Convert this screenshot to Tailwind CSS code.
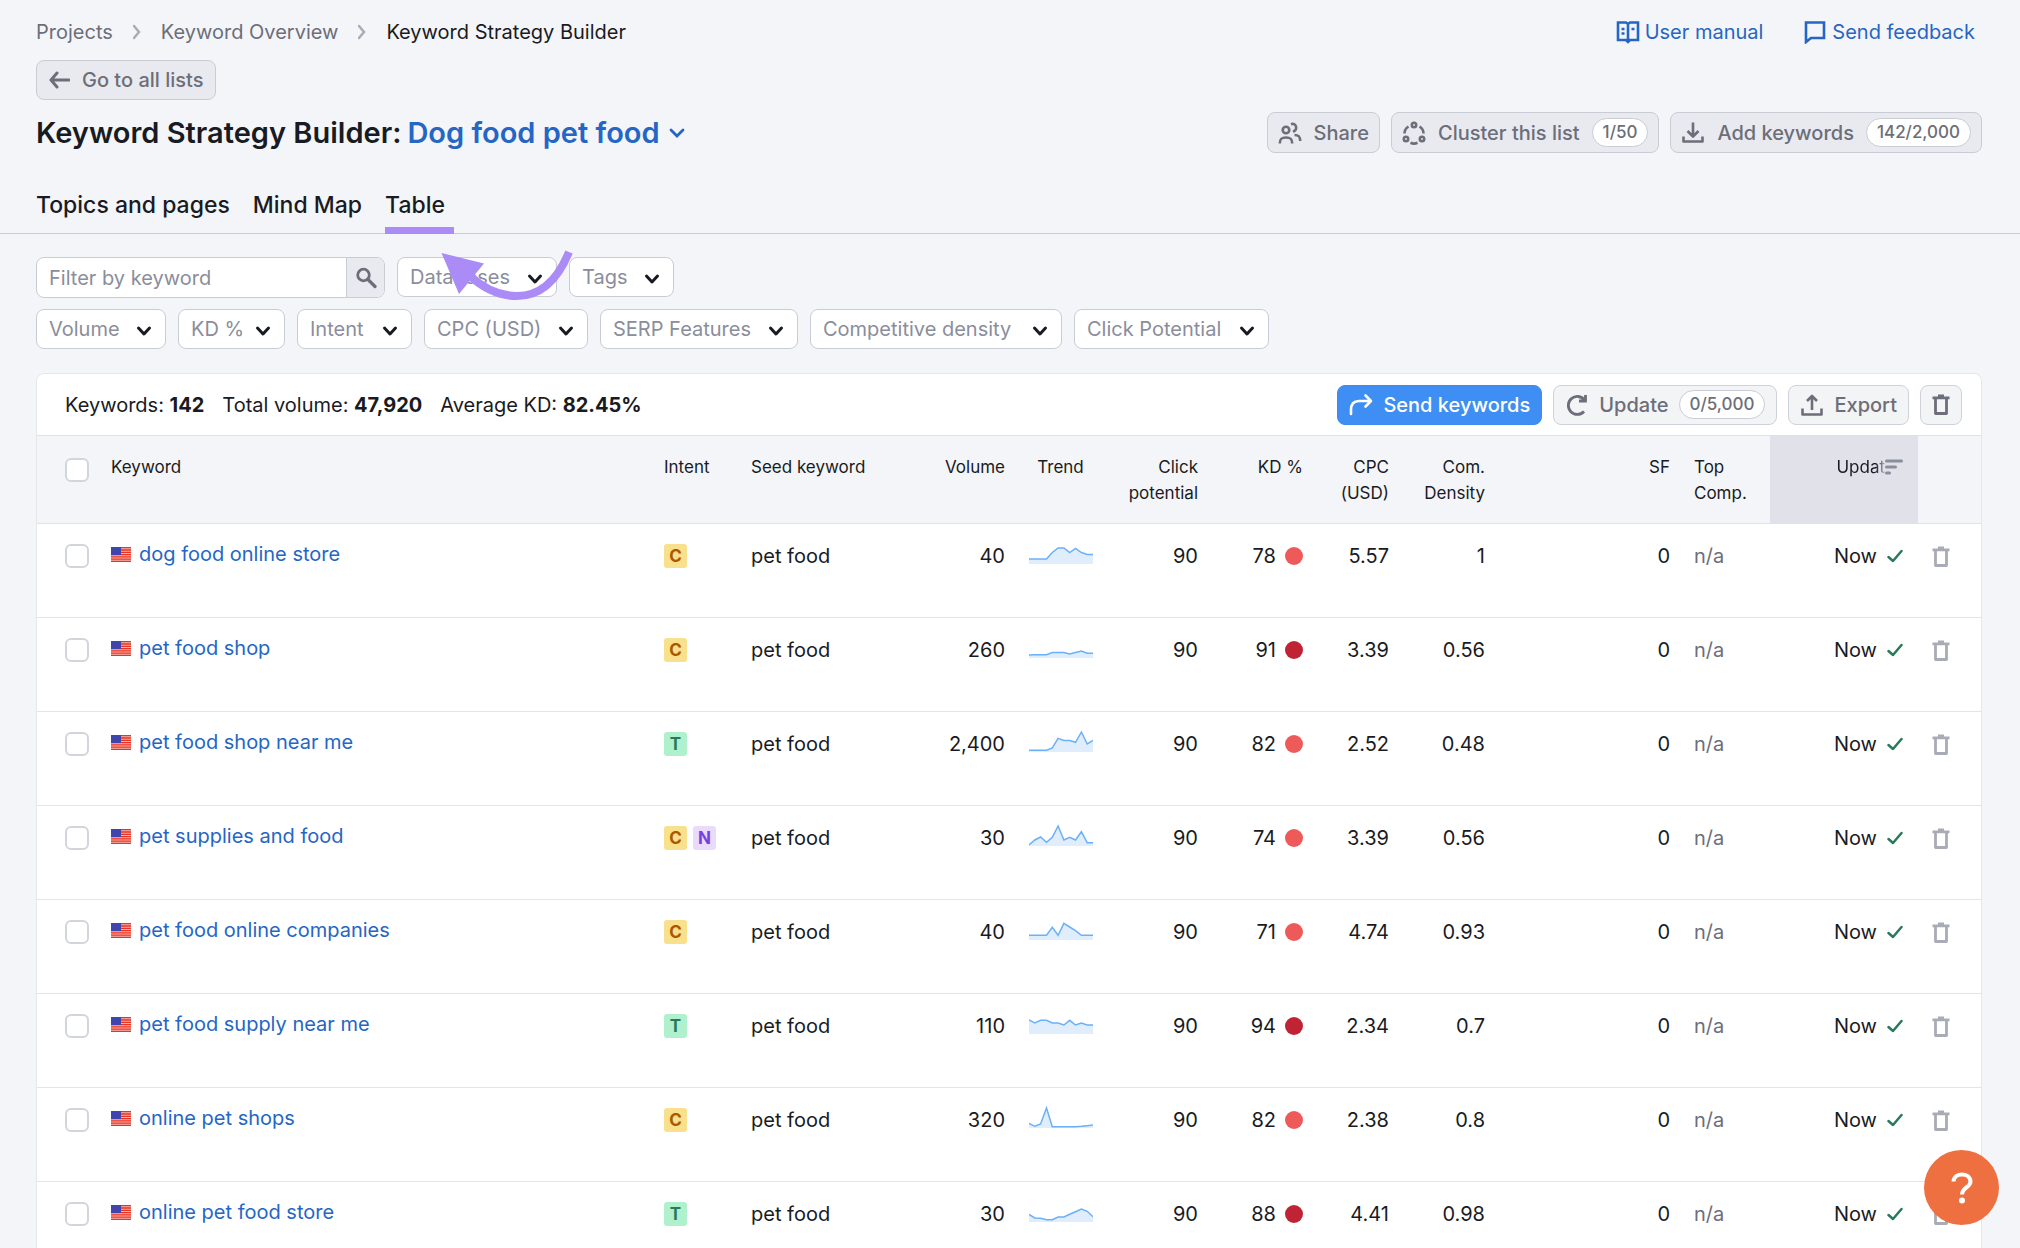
<!DOCTYPE html>
<html lang="en">
<head>
<meta charset="utf-8">
<meta name="viewport" content="width=device-width, initial-scale=1">
<title>Keyword Strategy Builder</title>
<script src="https://cdn.jsdelivr.net/npm/@tailwindcss/browser@4"></script>
</head>
<body class="bg-[#f4f5f9] font-['Inter',sans-serif] text-[20px] leading-7 text-[#191b23]">
<svg class="hidden" aria-hidden="true">
  <symbol id="chev" viewBox="0 0 16 16"><path d="M2.500 5l5.500 6 5.500-6" fill="none" stroke="currentColor" stroke-width="3" stroke-linecap="round" stroke-linejoin="round"/></symbol>
  <symbol id="trash" viewBox="0 0 18 22"><path d="M3.500 5v14.500h11V5" fill="none" stroke="currentColor" stroke-width="2.800" stroke-linejoin="round"/><path d="M.5 3.800h17M6 2h6" fill="none" stroke="currentColor" stroke-width="2.800"/></symbol>
  <symbol id="flag" viewBox="0 0 20 15"><path fill="#f9b9b0" d="M0 0h20v15H0z"/><path d="M0 .7h20M0 3h20M0 5.300h20M0 7.600h20M0 9.900h20M0 12.200h20M0 14.400h20" stroke="#ea3323" stroke-width="1.300"/><path fill="#3f45ac" d="M0 0h10v8H0z"/></symbol>
  <symbol id="check" viewBox="0 0 16 14"><path d="M1.500 8l4.500 4 8.500-10" fill="none" stroke="#287a5b" stroke-width="2.500" stroke-linecap="round" stroke-linejoin="round"/></symbol>
</svg>

<div class="relative">
  <header class="border-b border-[#c9ccd4]">
    <div class="pt-[18px] pr-[38px] pl-9">
      <div class="flex items-center justify-between">
        <nav class="flex items-center gap-5 text-[#6c6e79]" aria-label="Breadcrumb">
          <a href="#">Projects</a>
          <svg class="h-4 w-2" viewBox="0 0 8 16"><path d="M1 2l5 6-5 6" fill="none" stroke="#a9abb6" stroke-width="2.500" stroke-linecap="round"/></svg>
          <a href="#">Keyword Overview</a>
          <svg class="h-4 w-2" viewBox="0 0 8 16"><path d="M1 2l5 6-5 6" fill="none" stroke="#a9abb6" stroke-width="2.500" stroke-linecap="round"/></svg>
          <span class="text-[#191b23]">Keyword Strategy Builder</span>
        </nav>
        <div class="flex gap-10 pr-[7px] text-[#2566c5]">
          <a href="#" class="flex items-center gap-[5px]"><svg class="h-6 w-6" viewBox="0 0 24 24" fill="none" stroke="currentColor" stroke-width="2.600"><path d="M12 4l-2-1.500H2V20h8l2 2 2-2h8V2.500h-8zM12 4v18"/><path d="M5.500 9h3M5.500 13.500h3M15.500 9h3"/></svg>User manual</a>
          <a href="#" class="flex items-center gap-[5px]"><svg class="h-6 w-6" viewBox="0 0 24 24" fill="none" stroke="currentColor" stroke-width="2.600"><path d="M3 2.500h18V18H8l-5 4z"/></svg>Send feedback</a>
        </div>
      </div>
      <button class="mt-[14px] flex h-10 items-center gap-3 rounded-lg border border-[#c9ccd4] bg-[#e9eaef] px-3 font-medium text-[#6c6e79]">
        <svg class="h-5 w-[21px]" viewBox="0 0 21 20"><path d="M8 3L2 10l6 7M2.500 10H20" fill="none" stroke="currentColor" stroke-width="3" stroke-linecap="round" stroke-linejoin="round"/></svg>Go to all lists</button>
      <div class="mt-3 flex items-center justify-between">
        <h1 class="flex items-center gap-[6px] text-[29px] leading-10 font-semibold">Keyword Strategy Builder:
          <button class="flex items-center gap-[9px] text-[#2566c5]">Dog food pet food <svg class="h-4 w-4" viewBox="0 0 16 16"><path d="M2 5l6 6 6-6" fill="none" stroke="currentColor" stroke-width="2.800" stroke-linecap="round"/></svg></button></h1>
        <div class="flex gap-[11px] font-medium text-[#6c6e79] [&>button]:flex [&>button]:h-[41px] [&>button]:items-center [&>button]:gap-3 [&>button]:rounded-lg [&>button]:border [&>button]:border-[#c9ccd4] [&>button]:bg-[#e9eaef] [&>button]:px-[10px]">
          <button><svg class="h-6 w-6" viewBox="0 0 24 24" fill="none" stroke="currentColor" stroke-width="2.600"><circle cx="8" cy="9" r="3.300"/><path d="M1.800 22.500c0-5 2-6 6.200-6s6.200 1 6.200 6M13 3.200c5-2 7.500 5 2 7.500M16.500 14c4.500 0 5.700 2 5.700 6"/></svg>Share</button>
          <button><svg class="h-6 w-6" viewBox="0 0 24 24" fill="none" stroke="currentColor" stroke-width="2.600"><circle cx="12" cy="4" r="2.200"/><circle cx="4" cy="18" r="2.200"/><circle cx="20" cy="18" r="2.200"/><path d="M6.500 5.500c-2.500 1.500-4 4-4 7M17.500 5.500c2.500 1.500 4 4 4 7M8.500 21.800c2 .9 5 .9 7 0"/></svg>Cluster this list <span class="rounded-full border border-[#c9ccd4] bg-white px-[10px] text-[17px] leading-[27px]">1/50</span></button>
          <button><svg class="h-6 w-6" viewBox="0 0 24 24" fill="none" stroke="currentColor" stroke-width="2.600" stroke-linejoin="round"><path d="M12 1.500V15M6.500 10L12 15.500 17.500 10M2.500 15.500v5h19v-5"/></svg>Add keywords <span class="rounded-full border border-[#c9ccd4] bg-white px-[10px] text-[17px] leading-[27px]">142/2,000</span></button>
        </div>
      </div>
      <nav class="mt-[34px] flex h-[46px] gap-[23px] text-[23px] leading-[36px] font-medium" aria-label="Views">
        <a href="#">Topics and pages</a><a href="#">Mind Map</a><a href="#" class="relative" aria-current="page">Table<span class="absolute top-10 left-0 h-[7px] w-[69px] bg-[#ab8cf7]"></span></a>
      </nav>
    </div>
  </header>

  <main class="pr-[38px] pl-9">
    <form class="pt-[23px]">
      <div id="filters1" class="flex gap-3">
        <div class="flex h-[41px] w-[349px] overflow-hidden rounded-lg border border-[#c9ccd4] bg-white">
          <input aria-label="Filter by keyword" placeholder="Filter by keyword" class="min-w-0 flex-1 px-3 outline-none placeholder:text-[#8a8e9b]">
          <button type="button" aria-label="Search" class="flex w-[38px] items-center justify-center border-l border-[#c9ccd4] bg-[#e9eaef] text-[#6c6e79]"><svg class="h-[22px] w-[22px]" viewBox="0 0 22 22" fill="none" stroke="currentColor"><circle cx="8.500" cy="8" r="5.800" stroke-width="2.800"/><path d="M13 12.500l7 7" stroke-width="3.200" stroke-linecap="round"/></svg></button>
        </div>
      </div>
      <div id="filters2" class="mt-[11px] flex gap-3"></div>
    </form>

    <section class="mt-6 overflow-hidden rounded-t-lg border border-[#e6e7ed] bg-white">
      <div class="flex h-[61px] items-center justify-between pr-[19px] pl-7">
        <div class="flex gap-[18px]">
          <span>Keywords: <b class="font-bold">142</b></span><span>Total volume: <b class="font-bold">47,920</b></span><span>Average KD: <b class="font-bold">82.45%</b></span>
        </div>
        <div class="flex gap-[11px] font-medium text-[#6c6e79] [&>button]:flex [&>button]:h-10 [&>button]:items-center [&>button]:gap-[10px] [&>button]:rounded-lg [&>button]:border [&>button]:px-[11px]">
          <button class="border-[#3b8cf2] bg-[#3f8ef3] text-white"><svg class="h-6 w-6" viewBox="0 0 24 24" fill="none" stroke="currentColor" stroke-width="2.600" stroke-linecap="round" stroke-linejoin="round"><path d="M2 21v-4c0-6 3-9 8-9h12M16.500 2.500L22 8l-5.500 5.500"/></svg>Send keywords</button>
          <button class="border-[#d0d2da] bg-[#f3f4f6]"><svg class="h-6 w-6" viewBox="0 0 24 24" fill="none" stroke="currentColor" stroke-width="2.800"><path d="M19 18.500A9 9 0 1 1 19.500 7M20.500 2V8H14"/></svg>Update <span class="rounded-full border border-[#c9ccd4] bg-white px-[10px] text-[17px] leading-[27px]">0/5,000</span></button>
          <button class="border-[#d0d2da] bg-[#f3f4f6]"><svg class="h-6 w-6" viewBox="0 0 24 24" fill="none" stroke="currentColor" stroke-width="2.600" stroke-linejoin="round"><path d="M12 17V3M7 8l5-5 5 5M2.500 15.500v6h19v-6"/></svg>Export</button>
          <button class="border-[#d0d2da] bg-[#f3f4f6]" aria-label="Delete"><svg class="h-[22px] w-[18px]"><use href="#trash"/></svg></button>
        </div>
      </div>
      <table class="w-full table-fixed border-collapse [&_td]:px-3 [&_td]:pt-[18px] [&_td]:align-top [&_th]:px-3 [&_th]:pt-[18px] [&_th]:align-top">
        <colgroup><col class="w-[62px]"><col><col class="w-[87px]"><col class="w-[160px]"><col class="w-[118px]"><col class="w-[87px]"><col class="w-[106px]"><col class="w-[105px]"><col class="w-[86px]"><col class="w-[96px]"><col class="w-[185px]"><col class="w-[88px]"><col class="w-[148px]"><col class="w-[63px]"></colgroup>
        <thead>
          <tr class="h-[88px] border-y border-[#e0e1e9] bg-[#f4f5f9] text-left text-[17px] leading-[26px] [&>th]:font-normal">
            <th><input type="checkbox" aria-label="Select all" class="mt-1 ml-4 block h-6 w-6 appearance-none rounded-md border-2 border-[#d3d5dc] bg-white"></th>
            <th>Keyword</th><th>Intent</th><th>Seed keyword</th><th class="text-right">Volume</th><th class="text-center">Trend</th><th class="text-right">Click potential</th><th class="text-right">KD %</th><th class="text-right">CPC (USD)</th><th class="text-right">Com. Density</th><th class="text-right">SF</th><th>Top Comp.</th>
            <th class="bg-[#e0e1e9]"><div class="flex items-center justify-end pr-[3px]"><span class="bg-linear-to-r from-[#191b23] from-80% to-[#b5b6c0] bg-clip-text text-transparent">Updat</span><svg class="h-[18px] w-[18px]" viewBox="0 0 18 18"><path d="M1.500 3h15M1.500 9h9M1.500 15h3" stroke="#8a8e9b" stroke-width="3" stroke-linecap="round"/></svg></div></th><th></th>
          </tr>
        </thead>
        <tbody id="rows"></tbody>
      </table>
    </section>
  </main>

  <svg class="pointer-events-none absolute top-[246px] left-[436px] h-[58px] w-[140px]" viewBox="436 246 140 58" aria-hidden="true"><path d="M569 252Q551 296 517 296Q492 296 470 276" fill="none" stroke="#ab8cf7" stroke-width="8"/><path d="M441.500 253L484 263.500 459 294z" fill="#ab8cf7"/></svg>
</div>

<button class="fixed right-[21px] bottom-[23px] flex h-[75px] w-[75px] items-center justify-center rounded-full bg-[#ee6f40]" aria-label="Help"><svg class="h-8 w-6" viewBox="0 0 24 32"><path d="M3.500 9.500C4 0 20 0 20.500 9.500c0 6-8.500 6-8.500 13" fill="none" stroke="#fff" stroke-width="4"/><circle cx="12" cy="28.500" r="3" fill="#fff"/></svg></button>

<script>
const filter = ([name, width]) => `<div class="relative" style="width:${width}px"><select aria-label="${name}" class="h-10 w-full appearance-none rounded-lg border border-[#c9ccd4] bg-white pl-3 text-[#8a8e9b]"><option>${name}</option></select><svg class="pointer-events-none absolute top-[14px] right-[14px] h-4 w-4"><use href="#chev"/></svg></div>`;
document.getElementById('filters1').insertAdjacentHTML('beforeend', [['Databases',160],['Tags',105]].map(filter).join(''));
document.getElementById('filters2').innerHTML = [['Volume',130],['KD %',107],['Intent',115],['CPC (USD)',164],['SERP Features',198],['Competitive density',252],['Click Potential',195]].map(filter).join('');

const badge = {
  C: '<span class="h-6 w-[23px] rounded-[3px] bg-[#f8e08c] text-center text-[17px] leading-6 font-bold text-[#a75800]">C</span>',
  T: '<span class="h-6 w-[23px] rounded-[3px] bg-[#b0f1cd] text-center text-[17px] leading-6 font-bold text-[#287a5b]">T</span>',
  N: '<span class="h-6 w-[23px] rounded-[3px] bg-[#eadbfc] text-center text-[17px] leading-6 font-bold text-[#7a3fe0]">N</span>',
};
const data = [
  ['dog food online store','C','40',78,'5.57','1',[5,5,5,5,11.5,16,16,11.5,15.5,11.5,9.5,9.5]],
  ['pet food shop','C','260',91,'3.39','0.56',[3,3.3,3.3,3.3,5.5,5.5,5.5,4,5.5,7,4.7,4.7]],
  ['pet food shop near me','T','2,400',82,'2.52','0.48',[1.7,1.7,1.7,1.7,4,13.7,11.5,11.5,9.7,20,8,11.7]],
  ['pet supplies and food','CN','30',74,'3.39','0.56',[1,6,9,3.7,8.7,20,6,8.7,6,14.3,3.3,3.3]],
  ['pet food online companies','C','40',71,'4.74','0.93',[4.7,4.7,4.7,4.7,12.7,4.7,16.7,13,9.3,4.7,4.7,4.7]],
  ['pet food supply near me','T','110',94,'2.34','0.7',[14,11,13.7,13.7,11,11,9,13.7,9,11,9,9]],
  ['online pet shops','C','320',82,'2.38','0.8',[4.7,1.7,4,20,1.3,1.3,1.3,1.3,1.3,1.7,2.3,3]],
  ['online pet food store','T','30',88,'4.41','0.98',[7.7,4,3.7,2.3,2.3,5,5,7.7,10.3,13,10.7,5.3]],
];
const spark = v => {
  const p = v.map((h, i) => `${(i * 64 / 11).toFixed(1)} ${(22 - h).toFixed(1)}`).join('L');
  return `<svg class="h-[22px] w-16" viewBox="0 0 64 22"><path d="M${p}V22H0z" fill="#e0edfc"/><path d="M${p}" fill="none" stroke="#6bb0f8" stroke-width="1.500"/></svg>`;
};
document.getElementById('rows').innerHTML = data.map(([kw, intents, vol, kd, cpc, com, t]) => `
<tr class="h-[94px] border-b border-[#e4e5ec] text-right">
  <td><input type="checkbox" aria-label="Select ${kw}" class="mt-[2px] ml-4 block h-6 w-6 appearance-none rounded-md border-2 border-[#d3d5dc] bg-white"></td>
  <td><a href="#" class="flex items-center gap-2 leading-6 text-[#2566c5]"><svg class="h-[15px] w-5"><use href="#flag"/></svg><span>${kw}</span></a></td>
  <td><div class="flex gap-[6px] pt-[2px]">${[...intents].map(i => badge[i]).join('')}</div></td>
  <td class="text-left">pet food</td><td>${vol}</td><td>${spark(t)}</td><td>90</td>
  <td><div class="flex items-center justify-end gap-[9px]">${kd}<span class="${kd > 84 ? 'h-[18px] w-[18px] rounded-full bg-[#c02434]' : 'h-[18px] w-[18px] rounded-full bg-[#ee5a5a]'}"></span></div></td>
  <td>${cpc}</td><td>${com}</td><td>0</td><td class="text-left text-[#6c6e79]">n/a</td>
  <td><div class="flex items-center justify-end gap-[10px] pr-[3px]">Now<svg class="h-[14px] w-4"><use href="#check"/></svg></div></td>
  <td><button aria-label="Delete ${kw}" class="mt-1 ml-[2px] block text-[#a9abb6]"><svg class="h-[22px] w-[18px]"><use href="#trash"/></svg></button></td>
</tr>`).join('');
</script>
</body>
</html>
